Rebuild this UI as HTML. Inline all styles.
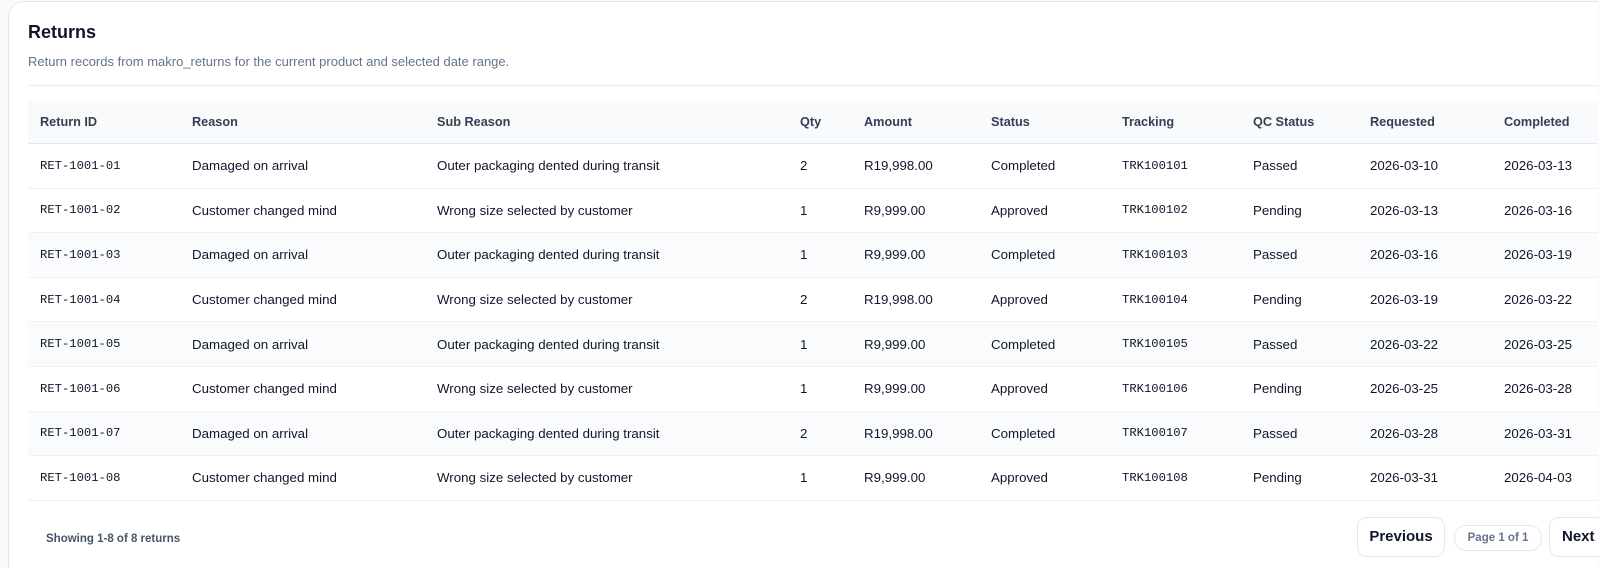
<!DOCTYPE html>
<html style="height:568px;overflow:hidden"><head><style>
body{margin:0;background:#f8fafc;font-family:"Liberation Sans",sans-serif;width:1599px;height:568px;overflow:hidden;position:relative}
.card{position:absolute;left:8px;top:1px;width:1590px;height:567px;background:#fff;border:1px solid #e2e8f0;border-right:none;border-bottom:none;border-radius:16px 0 0 0;box-sizing:border-box;overflow:hidden}
h1{position:absolute;left:19px;top:20px;margin:0;font-size:18px;font-weight:bold;color:#0f172a}
.sub{position:absolute;left:19px;top:52px;font-size:13px;color:#64748b}
.hr{position:absolute;left:19px;top:83px;width:1600px;border-top:1px solid #e8edf3}
table{position:absolute;left:19px;top:99px;width:1604px;border-collapse:collapse;font-size:13.3px;color:#0f172a;table-layout:fixed}
th{background:#f8fafc;height:42px;text-align:left;font-weight:bold;color:#334155;font-size:12.7px;padding:0 12px;border-bottom:1px solid #e2e8f0}
td{height:43.6px;padding:0 12px;border-bottom:1px solid #eef2f6}
tr.s td{background:#fafbfd}
.m{font-family:"Liberation Mono",monospace;font-size:12.2px}
.foot{position:absolute;left:46px;top:533px;font-size:11.5px;color:#475569;font-weight:bold}
.btn{position:absolute;top:517px;height:38px;border:1px solid #e2e8f0;border-radius:10px;background:#fff;font-size:15px;font-weight:bold;color:#0f172a;line-height:38px;text-align:center}
.pg{position:absolute;left:1454px;top:525px;width:86px;height:24px;border:1px solid #e2e8f0;border-radius:12px;font-size:11.5px;font-weight:bold;color:#64748b;line-height:24px;text-align:center;white-space:nowrap}
</style></head><body>
<div class="card">
<h1>Returns</h1>
<div class="sub">Return records from makro_returns for the current product and selected date range.</div>
<div class="hr"></div>
<table>
<colgroup><col style="width:152px"><col style="width:245px"><col style="width:363px"><col style="width:64px"><col style="width:127px"><col style="width:131px"><col style="width:131px"><col style="width:117px"><col style="width:134px"><col style="width:140px"></colgroup>
<tr><th>Return ID</th><th>Reason</th><th>Sub Reason</th><th>Qty</th><th>Amount</th><th>Status</th><th>Tracking</th><th>QC Status</th><th>Requested</th><th>Completed</th></tr>
<tr><td class="m">RET-1001-01</td><td>Damaged on arrival</td><td>Outer packaging dented during transit</td><td>2</td><td>R19,998.00</td><td>Completed</td><td class="m">TRK100101</td><td>Passed</td><td>2026-03-10</td><td>2026-03-13</td></tr>
<tr><td class="m">RET-1001-02</td><td>Customer changed mind</td><td>Wrong size selected by customer</td><td>1</td><td>R9,999.00</td><td>Approved</td><td class="m">TRK100102</td><td>Pending</td><td>2026-03-13</td><td>2026-03-16</td></tr>
<tr class="s"><td class="m">RET-1001-03</td><td>Damaged on arrival</td><td>Outer packaging dented during transit</td><td>1</td><td>R9,999.00</td><td>Completed</td><td class="m">TRK100103</td><td>Passed</td><td>2026-03-16</td><td>2026-03-19</td></tr>
<tr><td class="m">RET-1001-04</td><td>Customer changed mind</td><td>Wrong size selected by customer</td><td>2</td><td>R19,998.00</td><td>Approved</td><td class="m">TRK100104</td><td>Pending</td><td>2026-03-19</td><td>2026-03-22</td></tr>
<tr class="s"><td class="m">RET-1001-05</td><td>Damaged on arrival</td><td>Outer packaging dented during transit</td><td>1</td><td>R9,999.00</td><td>Completed</td><td class="m">TRK100105</td><td>Passed</td><td>2026-03-22</td><td>2026-03-25</td></tr>
<tr><td class="m">RET-1001-06</td><td>Customer changed mind</td><td>Wrong size selected by customer</td><td>1</td><td>R9,999.00</td><td>Approved</td><td class="m">TRK100106</td><td>Pending</td><td>2026-03-25</td><td>2026-03-28</td></tr>
<tr class="s"><td class="m">RET-1001-07</td><td>Damaged on arrival</td><td>Outer packaging dented during transit</td><td>2</td><td>R19,998.00</td><td>Completed</td><td class="m">TRK100107</td><td>Passed</td><td>2026-03-28</td><td>2026-03-31</td></tr>
<tr><td class="m">RET-1001-08</td><td>Customer changed mind</td><td>Wrong size selected by customer</td><td>1</td><td>R9,999.00</td><td>Approved</td><td class="m">TRK100108</td><td>Pending</td><td>2026-03-31</td><td>2026-04-03</td></tr>
</table>
</div>
<div class="foot">Showing 1-8 of 8 returns</div>
<div class="btn" style="left:1357px;width:86px">Previous</div>
<div class="pg">Page 1 of 1</div>
<div class="btn" style="left:1549px;width:100px;text-align:left;padding-left:12px">Next</div>
</body></html>
